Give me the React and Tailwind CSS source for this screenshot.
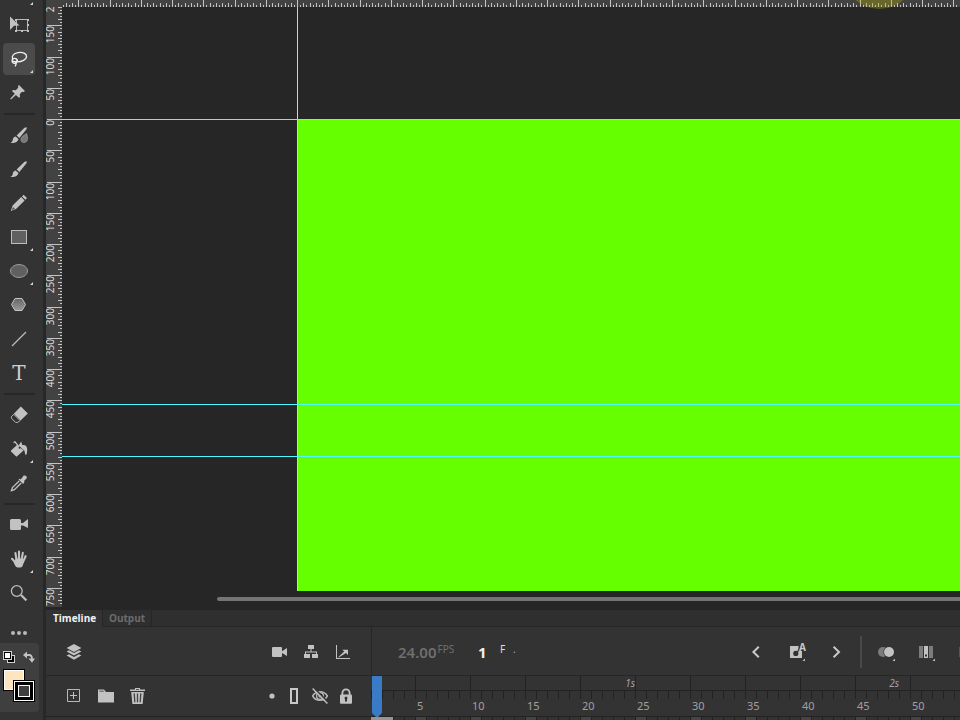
import React, { useState } from 'react';

const GUIDES_Y = [112, 397, 449];
const PX_PER_UNIT = 0.625;

const Icon = ({ children, size = 32 }) => (
  <svg width={size} height={size} viewBox={`0 0 ${size} ${size}`} fill="#c2c2c2" aria-hidden="true">
    {children}
  </svg>
);

const brushShape = (
  <>
    <path d="M23.9 8.2 L21.5 8.8 L13.6 16.4 L16.4 19 L23.3 10.6 Z" />
    <path d="M12.6 17.4 C10.6 17.8 9.9 19.2 9.8 20.8 C9.6 22.4 8.8 23.2 7.4 23.8 C11.2 24.4 14.8 23.6 15.5 20 Z" />
  </>
);

const toolGroups = [
  [
    {
      id: 'transform',
      label: 'Free transform',
      icon: (
        <>
          <rect x="13.5" y="10.5" width="11" height="11" fill="none" stroke="#b4b4b4" />
          <path d="M12 10h2v2h-2zM18 10h2v1h-2zM24 10h2v2h-2zM24 15h2v2h-2zM12 21h2v2h-2zM18 21h2v2h-2zM24 21h2v2h-2z" />
          <path d="M7 7.5 L16.5 16.5 L11 16.8 L7 21 Z" />
        </>
      ),
    },
    {
      id: 'lasso',
      label: 'Lasso',
      flyout: true,
      icon: (
        <g fill="none" stroke="#f0f0f0" strokeWidth="1.3">
          <path d="M9.8 16 C8.2 13.6 10.4 10.4 15 9.6 C19.6 8.8 23.6 10.4 23.6 13.4 C23.4 16.8 18.6 18.8 14.4 18.8" />
          <circle cx="11.6" cy="17.8" r="2.5" />
          <path d="M9.8 18 C12 19.4 15.4 18.8 14.2 16.6 M11.6 18 C13.2 19.4 13.6 21.4 12 23.4" />
        </g>
      ),
    },
    {
      id: 'pin',
      label: 'Asset warp',
      icon: (
        <path d="M16 8 L22 14 L20.6 15 L19.2 14.8 L16.8 17 L17 20 L16 20.8 L12.9 18 L8 22.4 L7.2 21.8 L11.8 16.8 L9 14 L10 13 L12.8 13.2 L15.2 10.8 L15 9 Z" />
      ),
    },
  ],
  [
    {
      id: 'fluid-brush',
      label: 'Fluid brush',
      icon: (
        <>
          {brushShape}
          <path
            d="M23.6 14.6 C21.4 16 17.8 18 18 21 C18.2 24.6 24.4 24.2 24.4 20.2 C24.5 18 24.2 16.4 23.6 14.6 Z"
            fill="#777"
            stroke="#999"
            strokeWidth="0.8"
          />
        </>
      ),
    },
    { id: 'brush', label: 'Classic brush', icon: brushShape },
    {
      id: 'pencil',
      label: 'Pencil',
      icon: (
        <>
          <path d="M20.6 7.8 L24 11 L22.4 12.7 L19 9.4 Z M18.2 10.1 L21.6 13.4 L13 22 L7.8 24 L9.6 18.6 Z" />
          <path d="M10 20 L12 22 L8.9 23.1 Z" fill="#555" />
        </>
      ),
    },
    {
      id: 'rectangle',
      label: 'Rectangle',
      flyout: true,
      icon: <rect x="8.5" y="9.5" width="15" height="13" fill="#606060" stroke="#bcbcbc" />,
    },
    {
      id: 'oval',
      label: 'Oval',
      flyout: true,
      icon: <ellipse cx="16" cy="16" rx="8.5" ry="6.5" fill="#606060" stroke="#9c9c9c" />,
    },
    {
      id: 'polystar',
      label: 'Polystar',
      icon: (
        <>
          <defs>
            <linearGradient id="polyFill" x1="0" y1="0" x2="0" y2="1">
              <stop offset="0" stopColor="#666" />
              <stop offset="1" stopColor="#999" />
            </linearGradient>
          </defs>
          <path d="M12 9.5 H19 L22.5 15.5 L19 21.5 H12 L8.5 15.5 Z" fill="url(#polyFill)" stroke="#c4c4c4" />
        </>
      ),
    },
    {
      id: 'line',
      label: 'Line',
      icon: <path d="M9 23 L23 9" stroke="#bcbcbc" strokeWidth="1.3" />,
    },
    { id: 'text', label: 'Text', glyph: 'T' },
  ],
  [
    {
      id: 'eraser',
      label: 'Eraser',
      icon: (
        <>
          <path d="M17.8 7.6 L24.8 14.6 L17.6 21.4 L10.8 14.8 Z" />
          <path d="M10.8 15.4 L17 21.6 L14.8 23.4 H12.6 L8.4 19.2 V17.6 Z" fill="none" stroke="#b8b8b8" />
        </>
      ),
    },
    {
      id: 'bucket',
      label: 'Paint bucket',
      flyout: true,
      icon: (
        <>
          <path d="M14 12 L20.6 17.6 L13.4 23.8 L8 18.4 V17.4 Z" />
          <path d="M10.6 9.6 L12 8.8 L16.6 14.6" fill="none" stroke="#c2c2c2" strokeWidth="1.3" />
          <path d="M15.6 12.4 L18.2 8.6 L19.2 12 C22.6 11.6 24.4 13.4 24.2 17 C24.2 20 23.6 22 22.6 22 C21.6 20.6 22.2 17.4 20.2 16.8 Z" />
          <circle cx="16.6" cy="14.8" r="1" fill="#333" />
        </>
      ),
    },
    {
      id: 'eyedropper',
      label: 'Eyedropper',
      icon: (
        <>
          <path d="M17.4 12.4 L19 11 L20.4 8.8 C22.4 7.6 24.6 9.4 23.6 11.6 L21.4 13.4 L21 16.4 L19.6 16.6 L15.6 12.6 L16.2 11.4 Z" />
          <path d="M16.2 14 L9.4 20.6 L8.4 23.6 L11.4 22.6 L18.2 16" fill="none" stroke="#c2c2c2" strokeWidth="1.3" />
        </>
      ),
    },
  ],
  [
    {
      id: 'camera',
      label: 'Camera',
      icon: (
        <>
          <rect x="7" y="10" width="11" height="11" rx="1.5" />
          <path d="M18 14 L20 14 L25 10 V19 L20 16.6 L18 16.6 Z" />
        </>
      ),
    },
    {
      id: 'hand',
      label: 'Hand',
      flyout: true,
      icon: (
        <>
          <path
            d="M12.4 10 L13.6 17 M16 8.6 V17 M19.8 9.8 L18.6 17 M22.6 13.2 L20 19 M9 15.8 L13 20"
            fill="none"
            stroke="#c2c2c2"
            strokeWidth="2.1"
            strokeLinecap="round"
          />
          <path d="M12.4 15.5 H19.6 L21 18.4 C20.2 21.6 19.4 24.4 17.6 24.4 H14.6 C12.6 24.2 11.6 21.4 10.6 19.4 L12 18 Z" />
        </>
      ),
    },
    {
      id: 'zoom',
      label: 'Zoom',
      icon: (
        <g fill="none" stroke="#bcbcbc">
          <circle cx="13.8" cy="14" r="5.4" strokeWidth="1.3" />
          <path d="M18 18 L23.4 23.4" strokeWidth="2.2" />
        </g>
      ),
    },
  ],
];

const Flyout = ({ className }) => (
  <svg className={`absolute ${className}`} width="3" height="3" viewBox="0 0 3 3" aria-hidden="true">
    <path d="M3 0 V3 H0 Z" fill="#d4d4d4" />
  </svg>
);

const ToolButton = ({ tool, active, onSelect }) => (
  <div className="flex h-[34px] items-center">
    <button
      type="button"
      aria-label={tool.label}
      aria-pressed={active}
      onClick={() => onSelect(tool.id)}
      className={`relative flex h-8 w-8 items-center justify-center rounded ${active ? 'bg-[#4b4b4b]' : ''}`}
    >
      {tool.glyph ? (
        <span className="font-['DejaVu_Serif',serif] text-[20px] leading-8 text-[#d0d0d0]">{tool.glyph}</span>
      ) : (
        <Icon>{tool.icon}</Icon>
      )}
      {tool.flyout && <Flyout className="bottom-0.5 right-0.5" />}
    </button>
  </div>
);

const Swatches = () => (
  <div className="h-[69px] w-[39px] rounded-r bg-[#3f3f3f] pl-[3px] pt-2">
    <div className="flex h-[18px] items-start justify-between pr-1">
      <button type="button" aria-label="Default colors">
        <svg width="12" height="12" viewBox="0 0 12 12" aria-hidden="true">
          <rect x="4.5" y="4.5" width="7" height="7" fill="#000" stroke="#d0d0d0" />
          <rect x="0.5" y="0.5" width="8" height="8" fill="#fff" stroke="#d0d0d0" />
          <rect x="1.5" y="1.5" width="6" height="6" fill="#fff" stroke="#000" />
        </svg>
      </button>
      <button type="button" aria-label="Swap colors">
        <svg width="12" height="12" viewBox="0 0 12 12" aria-hidden="true">
          <path d="M3 4 H6 Q9 4 9 8" fill="none" stroke="#c2c2c2" strokeWidth="1.8" />
          <path d="M0 4 L4 0.6 V7.4 Z M5.6 7.6 H12 L9 11.8 Z" fill="#c2c2c2" />
        </svg>
      </button>
    </div>
    <div className="relative h-8 w-8">
      <button
        type="button"
        aria-label="Fill color"
        className="absolute left-0 top-0 h-[22px] w-[22px] border border-black bg-white p-px"
      >
        <span className="block h-full w-full bg-[#ffe5bf]" />
      </button>
      <button
        type="button"
        aria-label="Stroke color"
        className="absolute left-[10px] top-[11px] h-[22px] w-[22px] border border-black bg-white p-px"
      >
        <span className="block h-full w-full bg-black p-[3px]">
          <span className="block h-full w-full border border-white bg-[#3f3f3f]" />
        </span>
      </button>
    </div>
  </div>
);

const Toolbar = () => {
  const [activeTool, setActiveTool] = useState('lasso');

  return (
    <aside className="relative flex h-full w-[43px] shrink-0 flex-col bg-[#333] pt-2">
      <Flyout className="left-[30px] top-0.5" />
      {toolGroups.map((group, i) => (
        <div key={group[0].id} className="pl-[3px]">
          {i > 0 && (
            <div className="h-2 pt-[3px]">
              <div className="ml-px h-0.5 w-[31px] bg-[#272727]" />
            </div>
          )}
          {group.map((tool) => (
            <ToolButton key={tool.id} tool={tool} active={tool.id === activeTool} onSelect={setActiveTool} />
          ))}
        </div>
      ))}
      <button
        type="button"
        aria-label="Edit toolbar"
        className="ml-[3px] mt-[13px] flex h-5 w-8 items-center justify-center gap-0.5"
      >
        <span className="h-1 w-1 rounded-full bg-[#b8b8b8]" />
        <span className="h-1 w-1 rounded-full bg-[#b8b8b8]" />
        <span className="h-1 w-1 rounded-full bg-[#b8b8b8]" />
      </button>
      <Swatches />
    </aside>
  );
};

// tick positions every 5 units, measured from the stage origin
const buildTicks = (origin, from, to) => {
  const ticks = [];
  for (let u = from; u <= to; u += 5) {
    ticks.push({ unit: u, pos: origin + Math.round(u * PX_PER_UNIT) });
  }
  return ticks;
};

const columnTicks = buildTicks(235, -375, 3000);
const rowTicks = buildTicks(112, -200, 1080);

const HorizontalRuler = () => (
  <div className="h-[7px] shrink-0 overflow-hidden bg-[#424242] pl-4">
    <svg width="100%" height="7" aria-hidden="true">
      {columnTicks.map(({ unit, pos }) => {
        const len = unit % 50 === 0 ? 7 : unit % 10 === 0 ? 4 : 2;
        return <rect key={unit} x={pos} y={7 - len} width="1" height={len} fill="#c4c4c4" />;
      })}
    </svg>
  </div>
);

const VerticalRuler = () => (
  <div className="w-4 shrink-0 overflow-hidden bg-[#424242]">
    <svg width="16" height="100%" className="block font-['Open_Sans',sans-serif] text-[10px]" fill="#e0e0e0">
      {rowTicks.map(({ unit, pos }) => {
        const len = unit % 50 === 0 ? 15 : unit % 10 === 0 ? 4 : 2;
        return <rect key={unit} x={16 - len} y={pos} width={len} height="1" fill="#c4c4c4" />;
      })}
      {rowTicks
        .filter(({ unit }) => unit % 50 === 0)
        .map(({ unit, pos }) => (
          <text key={unit} transform={`translate(8 ${pos + 1}) rotate(-90)`} textAnchor="end">
            {Math.abs(unit)}
          </text>
        ))}
    </svg>
  </div>
);

const Workspace = () => (
  <section className="relative flex min-h-0 flex-1 flex-col overflow-hidden bg-[#262626] pb-[3px]">
    <HorizontalRuler />
    <div className="flex min-h-0 flex-1">
      <VerticalRuler />
      <div className="flex min-w-0 flex-1 flex-col">
        <div className="relative flex-1 overflow-hidden">
          <div className="absolute bottom-0 left-[235px] right-0 top-[112px] bg-[#66ff00]" />
          <div className="absolute bottom-0 left-[235px] top-0 w-px bg-[#66ffff]" />
          {GUIDES_Y.map((y) => (
            <div key={y} className="absolute left-0 right-0 h-px bg-[#4df9ff]" style={{ top: y }} />
          ))}
        </div>
        <div className="h-4 pl-[155px] pt-1.5">
          <div className="h-1 rounded-l-full bg-[#757575]" />
        </div>
      </div>
    </div>
    {/* pointer highlight */}
    <div className="absolute left-[797px] top-[-64px] h-[73px] w-[73px] rounded-full bg-[#b0a800]/35" />
  </section>
);

const IconButton = ({ label, className = '', children }) => (
  <button type="button" aria-label={label} className={`flex h-4 w-4 shrink-0 items-center justify-center ${className}`}>
    <Icon size={16}>{children}</Icon>
  </button>
);

const LayerTools = () => (
  <div className="flex h-12 w-[325px] shrink-0 items-center pl-5 pt-0.5">
    <IconButton label="Layer depth">
      <path d="M8 0 L15.4 4 L8 8 L0.6 4 Z" />
      <path d="M0.6 7.4 L3 6.2 L8 9 L13 6.2 L15.4 7.4 L8 11.6 Z" />
      <path d="M0.6 11.4 L3 10.2 L8 13 L13 10.2 L15.4 11.4 L8 15.8 Z" />
    </IconButton>
    <IconButton label="Add camera" className="ml-[189px]">
      <rect x="1" y="3" width="10" height="10" rx="1" />
      <path d="M10.6 7.4 L16 4 V12 L10.6 8.8 Z" />
    </IconButton>
    <IconButton label="Show parenting view" className="ml-4">
      <path d="M5 1h6v4H8.5v2.5H14V10h1v4H9v-4h4V8.6H3V10h4v4H1v-4h1V7.5h5.5V5H5z" />
    </IconButton>
    <IconButton label="Graph" className="ml-4">
      <path d="M1 1h1v13h13v1H1z" />
      <path d="M3.4 13 L9.2 7.6 L7.4 5.8 H13 V11 L11 9 L3.8 13.6 Z" />
    </IconButton>
  </div>
);

const FrameTools = () => (
  <div className="flex h-12 min-w-0 flex-1 items-center overflow-hidden border-l border-[#262626] pt-px font-['Noto_Sans',sans-serif]">
    <div className="flex w-[106px] shrink-0 items-start pl-[26px] text-[#6f6f6f]">
      <span className="text-[15px] font-semibold leading-5">24.00</span>
      <span className="pl-px text-[10px] leading-[14px]">FPS</span>
    </div>
    <div className="flex items-start text-[#ddd]">
      <span className="w-[22px] text-[15px] font-bold leading-5 text-[#f0f0f0]">1</span>
      <span className="w-[13px] text-[10px] leading-[14px]">F</span>
      <span className="text-[10px] leading-[14px] text-[#aaa]">.</span>
    </div>
    <div className="ml-auto flex h-full shrink-0 items-center">
      <IconButton label="Previous keyframe">
        <path d="M10.8 2.8 L5.4 8 L10.8 13.2" fill="none" stroke="#c8c8c8" strokeWidth="2" />
      </IconButton>
      <button type="button" aria-label="Insert keyframe" className="relative ml-[26px] h-5 w-4 text-[#c8c8c8]">
        <svg width="16" height="20" viewBox="0 0 16 20" fill="#c2c2c2" aria-hidden="true">
          <path d="M0 4 H8.6 L8 9 H12 V16 H0 Z" />
          <circle cx="5.8" cy="11.4" r="2.6" fill="#333" />
          <path d="M6.6 10.6 L9 8" stroke="#333" strokeWidth="1.2" />
          <path d="M15 16.5 V19 H12.5 Z" />
        </svg>
        <span className="absolute right-0 top-0 text-[10px] font-bold leading-[10px]">A</span>
      </button>
      <IconButton label="Next keyframe" className="ml-[22px]">
        <path d="M5.6 2.8 L11 8 L5.6 13.2" fill="none" stroke="#c8c8c8" strokeWidth="2" />
      </IconButton>
      <div className="ml-4 h-8 w-0.5 bg-[#484848]" />
      <button type="button" aria-label="Onion skin" className="ml-4">
        <svg width="18" height="20" viewBox="0 0 18 20" fill="#c2c2c2" aria-hidden="true">
          <circle cx="5" cy="10" r="5" fill="#7c7c7c" />
          <circle cx="11" cy="10" r="5.6" fill="#333" />
          <circle cx="11" cy="10" r="5" />
          <path d="M17 16.5 V19 H14.5 Z" />
        </svg>
      </button>
      <button type="button" aria-label="Edit multiple frames" className="ml-[23px]">
        <svg width="16" height="20" viewBox="0 0 16 20" fill="#c2c2c2" aria-hidden="true">
          <path d="M0 4h4v12H0zM10 4h4v12h-4z" fill="#7c7c7c" />
          <path d="M5 4h4v12H5z" />
          <path d="M6 12.5h2v2H6z" fill="#333" />
          <path d="M16 16.5 V19 H13.5 Z" />
        </svg>
      </button>
      <div className="ml-6 h-2.5 w-px bg-[#555]" />
    </div>
  </div>
);

const LayerActions = () => (
  <div className="flex h-10 w-[325px] shrink-0 items-center pl-5">
    <IconButton label="New layer">
      <path d="M1.5 1.5h12v12h-12z" fill="none" stroke="#b8b8b8" />
      <path d="M7 4h1v3h3v1H8v3H7V8H4V7h3z" />
    </IconButton>
    <IconButton label="New folder" className="ml-4">
      <path d="M0 1.5h6l2 2.5h8v10.5H0z" />
      <path d="M1.4 2.6h4l1 1.4h-5z" fill="#333" opacity="0.5" />
    </IconButton>
    <IconButton label="Delete layer" className="ml-4">
      <path d="M5 0h5v1.6h5V3H0V1.6h5zM6 1v.8h3V1zM1.2 4h12.6l-1.2 12H2.4z" fillRule="evenodd" />
      <path d="M4.2 5.4l.6 8.8M7.5 5.4v8.8M10.8 5.4l-.6 8.8" stroke="#444" strokeWidth="1.3" />
    </IconButton>
    <IconButton label="Highlight layers" className="ml-[118px]">
      <circle cx="8" cy="8" r="2.6" />
    </IconButton>
    <IconButton label="Show outlines" className="ml-1.5">
      <path d="M5 1h6v14H5z" fill="none" stroke="#c8c8c8" strokeWidth="2" />
    </IconButton>
    <IconButton label="Hide layers" className="ml-2.5">
      <path d="M0.6 8 C4 2.2 12 2.2 15.4 8 C12 13.8 4 13.8 0.6 8 Z" fill="none" stroke="#b8b8b8" strokeWidth="1.5" />
      <circle cx="8" cy="8" r="3.4" fill="none" stroke="#b8b8b8" strokeWidth="1.3" />
      <circle cx="8" cy="8" r="1.5" />
      <path d="M1.6 -0.4 L16 14" stroke="#333" strokeWidth="1.5" />
      <path d="M0.6 0.6 L15.4 15.4" stroke="#c2c2c2" strokeWidth="1.4" />
    </IconButton>
    <IconButton label="Lock layers" className="ml-2.5">
      <path d="M4.4 7 V5 A3.6 3.6 0 0 1 11.6 5 V7" fill="none" stroke="#c2c2c2" strokeWidth="1.8" />
      <rect x="2" y="6.6" width="12" height="9.2" rx="1" />
      <path d="M7 10h2v3.4H7z" fill="#333" />
      <circle cx="8" cy="10" r="1.5" fill="#333" />
    </IconButton>
  </div>
);

const frameGroups = Array.from({ length: 40 }, (_, i) => (i + 1) * 5);
const secondMarks = { 20: '1s', 45: '2s' };

const FrameTicks = ({ count }) => (
  <div className="flex h-2">
    {Array.from({ length: count }, (_, i) => (
      <span key={i} className="h-full w-[11px] border-l border-[#222]" />
    ))}
  </div>
);

const FrameRuler = () => (
  <div className="relative flex h-10 min-w-0 flex-1 font-['Noto_Sans',sans-serif] text-[11px] text-[#a0a0a0]">
    <div className="flex min-w-0 flex-1 overflow-hidden">
      <div className="w-11 shrink-0">
        <div className="h-[15px] border-b border-[#222]" />
        <FrameTicks count={4} />
      </div>
      {frameGroups.map((frame) => (
        <div key={frame} className="w-[55px] shrink-0">
          <div
            className={`h-[15px] border-b border-l border-[#222] text-right text-[10px] italic leading-[14px] ${
              frame === 45 ? 'pr-[11px]' : ''
            }`}
          >
            {secondMarks[frame]}
          </div>
          <FrameTicks count={5} />
          <div className="pl-0.5 leading-[14px]">{frame}</div>
        </div>
      ))}
    </div>
    <svg className="absolute left-px top-0" width="10" height="41" viewBox="0 0 10 41" aria-hidden="true">
      <path d="M0 0 H10 V37 L6 41 H4 L0 37 Z" fill="#397bc6" />
    </svg>
  </div>
);

const FrameCells = () => (
  <div className="flex min-w-0 flex-1 overflow-hidden">
    <span className="h-full w-[22px] shrink-0 bg-[#989396]" />
    {Array.from({ length: 202 }, (_, i) => i + 3).map((frame) => (
      <span
        key={frame}
        className={`h-full w-[11px] shrink-0 border-l border-[#222] ${frame % 5 === 0 ? 'bg-[#444]' : 'bg-[#333]'}`}
      />
    ))}
  </div>
);

const Timeline = () => (
  <section className="shrink-0 bg-[#333]">
    <div className="flex h-[17px] font-['Open_Sans',sans-serif] text-[10px] font-bold leading-4">
      <button type="button" className="w-14 border-b border-[#333] pl-[7px] text-left text-[#f2f2f2]">
        Timeline
      </button>
      <button
        type="button"
        className="w-[50px] border-x border-b border-[#262626] bg-[#2f2f2f] pl-1.5 text-left text-[#6c6c6c]"
      >
        Output
      </button>
      <div className="flex-1 border-b border-[#262626] bg-[#2f2f2f]" />
    </div>
    <div className="flex border-b border-[#262626]">
      <LayerTools />
      <FrameTools />
    </div>
    <div className="flex border-b border-[#222]">
      <LayerActions />
      <FrameRuler />
    </div>
    <div className="flex h-[3px]">
      <div className="w-[325px] shrink-0" />
      <FrameCells />
    </div>
  </section>
);

const App = () => (
  <div className="flex h-screen w-full overflow-hidden bg-[#333]">
    <Toolbar />
    <div className="flex min-w-0 flex-1 flex-col border-l-[3px] border-[#282828]">
      <Workspace />
      <Timeline />
    </div>
  </div>
);

export default App;
